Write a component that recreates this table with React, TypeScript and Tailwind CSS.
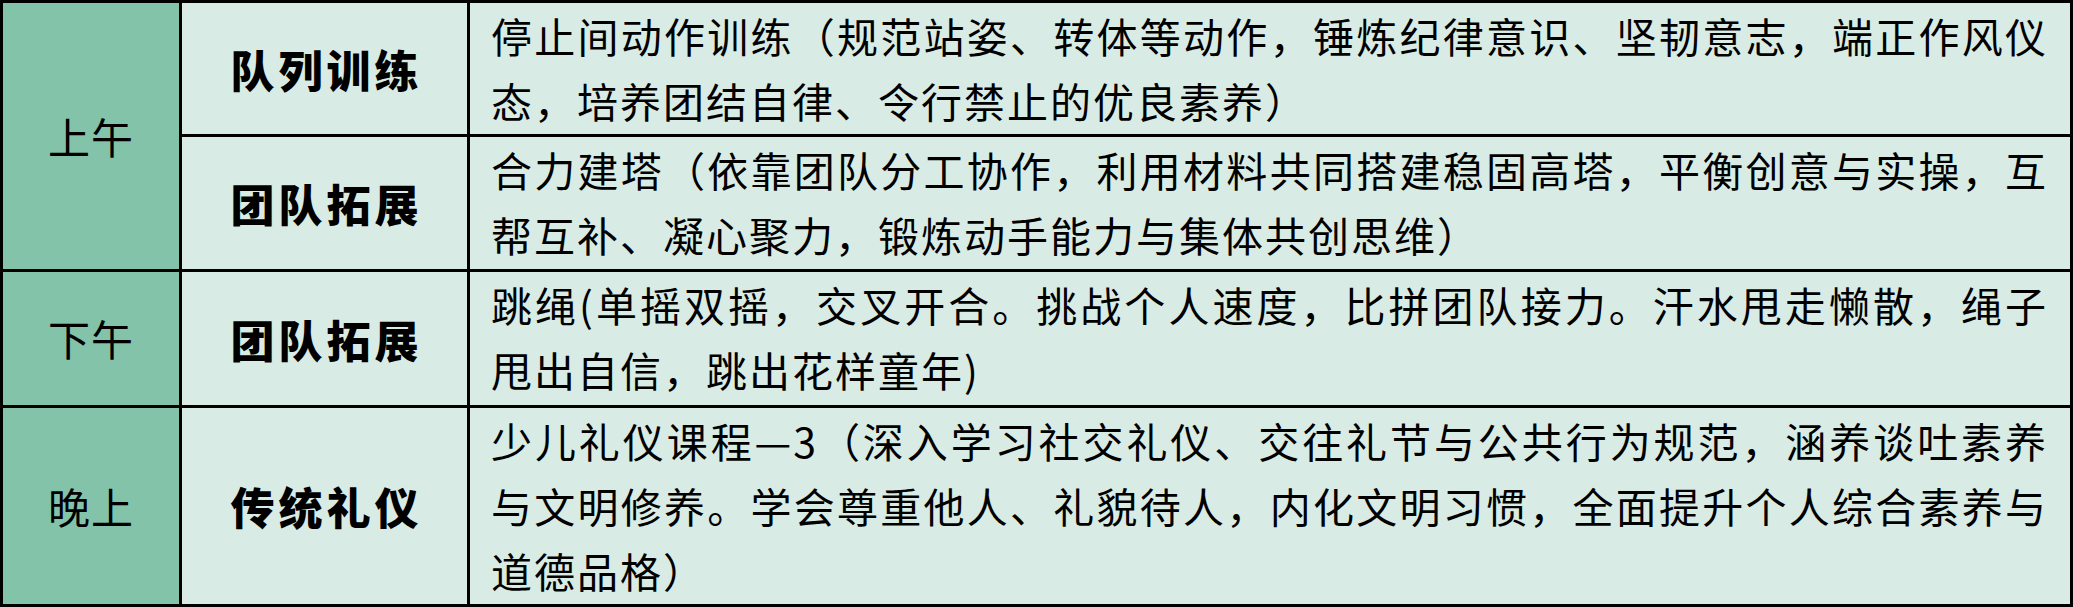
// ─── Data ─────────────────────────────────────────────────

interface Activity {
  title: string;
  lines: string[];
}

interface Session {
  period: string;
  activities: Activity[];
}

const SCHEDULE: Session[] = [
  {
    period: "上午",
    activities: [
      {
        title: "队列训练",
        lines: [
          "停止间动作训练（规范站姿、转体等动作，锤炼纪律意识、坚韧意志，端正作风仪",
          "态，培养团结自律、令行禁止的优良素养）",
        ],
      },
      {
        title: "团队拓展",
        lines: [
          "合力建塔（依靠团队分工协作，利用材料共同搭建稳固高塔，平衡创意与实操，互",
          "帮互补、凝心聚力，锻炼动手能力与集体共创思维）",
        ],
      },
    ],
  },
  {
    period: "下午",
    activities: [
      {
        title: "团队拓展",
        lines: [
          "跳绳(单摇双摇，交叉开合。挑战个人速度，比拼团队接力。汗水甩走懒散，绳子",
          "甩出自信，跳出花样童年)",
        ],
      },
    ],
  },
  {
    period: "晚上",
    activities: [
      {
        title: "传统礼仪",
        lines: [
          "少儿礼仪课程—3（深入学习社交礼仪、交往礼节与公共行为规范，涵养谈吐素养",
          "与文明修养。学会尊重他人、礼貌待人，内化文明习惯，全面提升个人综合素养与",
          "道德品格）",
        ],
      },
    ],
  },
];

const FONT = "font-['Noto_Sans_CJK_SC',sans-serif]";

// ─── Cells ────────────────────────────────────────────────

function PeriodCell({ label, span }: { label: string; span: number }) {
  return (
    <div
      className={`${span === 2 ? "row-span-2" : ""} flex items-center justify-center bg-[#83c3aa] text-[42px] tracking-[1px] text-black`}
    >
      <span className="-translate-y-[1px]">{label}</span>
    </div>
  );
}

function TitleCell({ title }: { title: string }) {
  return (
    <div className="flex items-center justify-center bg-[#d9ebe5] text-[44px] font-black tracking-[4px] text-black">
      <span className="pl-[4px]">{title}</span>
    </div>
  );
}

function DetailCell({ lines }: { lines: string[] }) {
  return (
    <div className="bg-[#d9ebe5] pl-[21px] pr-[22px] text-[41px] leading-[65px] tracking-[2px] text-black">
      {lines.map((line, i) => (
        <div
          key={i}
          className={
            i < lines.length - 1
              ? "whitespace-nowrap text-justify [text-align-last:justify]"
              : "whitespace-nowrap"
          }
        >
          {line}
        </div>
      ))}
    </div>
  );
}

// ─── Page ─────────────────────────────────────────────────

export default function App() {
  return (
    <div
      className={`${FONT} grid h-[607px] w-[2073px] grid-cols-[176px_285px_1fr] grid-rows-[131px_132px_133px_196px] gap-[3px] bg-black p-[3px]`}
    >
      {SCHEDULE.map((session) =>
        session.activities.map((act, i) => (
          <div key={`${session.period}-${i}`} className="contents">
            {i === 0 && (
              <PeriodCell label={session.period} span={session.activities.length} />
            )}
            <TitleCell title={act.title} />
            <DetailCell lines={act.lines} />
          </div>
        )),
      )}
    </div>
  );
}
